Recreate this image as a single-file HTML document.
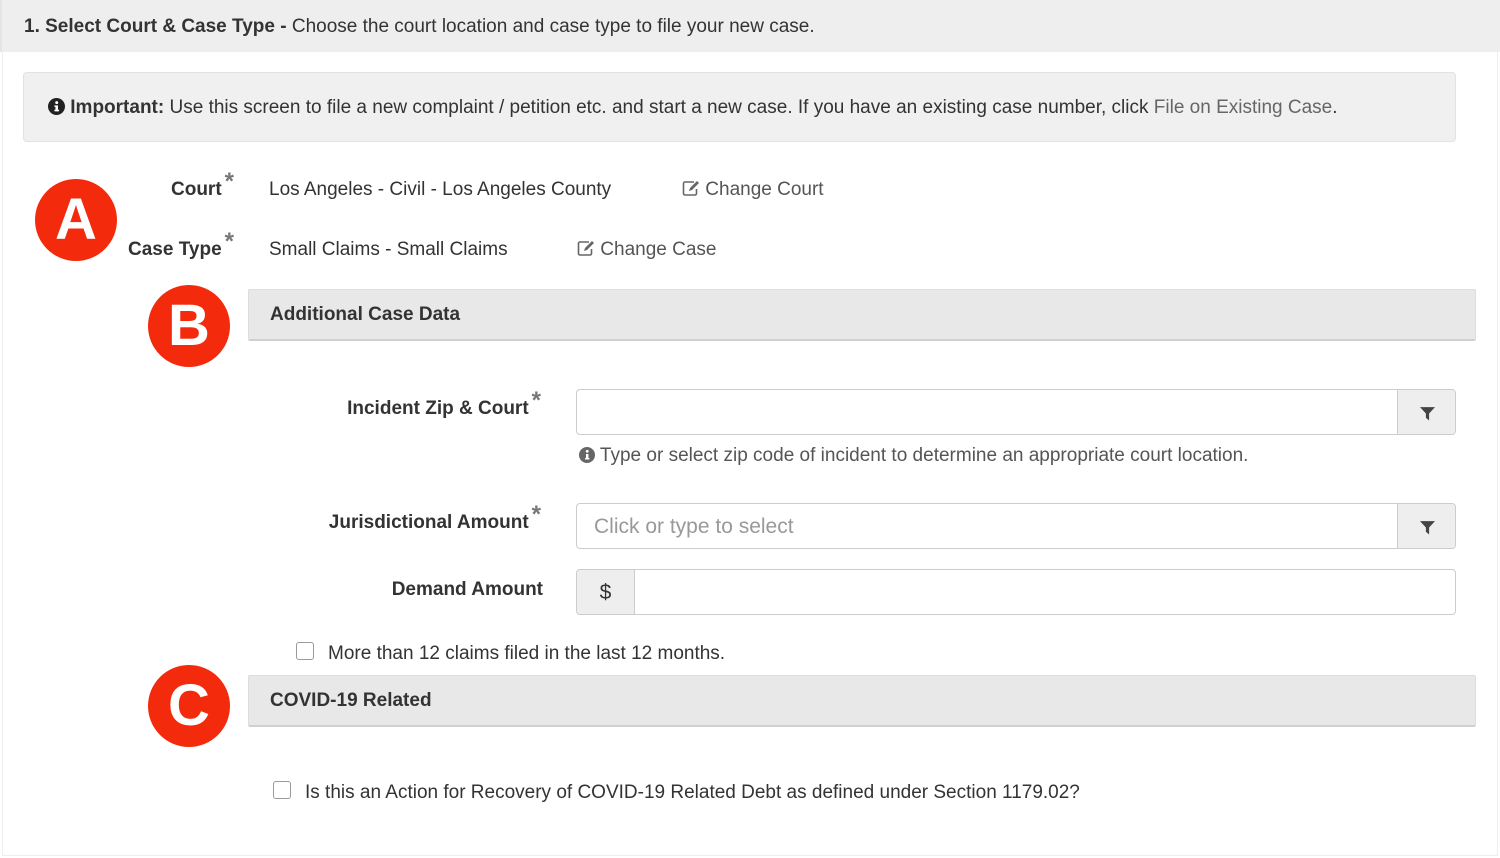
<!DOCTYPE html>
<html><head><meta charset="utf-8"><style>
*{box-sizing:border-box;margin:0;padding:0}
body{width:1500px;height:858px;background:#fff;font-family:"Liberation Sans",Arial,sans-serif;color:#333;position:relative;overflow:hidden;font-size:19px}
.a{position:absolute;white-space:nowrap}
.r{position:absolute;white-space:nowrap;text-align:right}
.hdr{left:0;top:0;width:1500px;height:52px;background:#eeeeee;border-left:2px solid #e4e4e4}
.frame{left:2px;top:52px;width:1496px;height:804px;border:1px solid #eee;border-top:none}
.alert{left:23px;top:72px;width:1433px;height:70px;background:#f0f0f0;border:1px solid #e2e2e2;border-radius:4px}
.lbl{font-weight:bold}
.star{color:#777;font-size:24px;position:relative;top:-6px;margin-left:3px;font-weight:bold;line-height:0}
.circ{width:82px;height:82px;border-radius:50%;background:#f42a0c;color:#fff;font-size:58px;text-align:center;line-height:82px;font-weight:bold}
.bar{left:248px;width:1228px;height:52px;background:#e8e8e8;border:1px solid #ddd;border-bottom:2px solid #d0d0d0;border-radius:2px;font-weight:bold;padding-left:21px;line-height:50px}
.inp{border:1px solid #ccc;border-radius:4px;background:#fff}
.btn{background:#eee;border-left:1px solid #ccc}
.cb{width:18px;height:18px;border:1px solid #999;border-radius:3px;background:#fff}
.gray{color:#555}
</style></head><body>
<div class="a hdr"></div>
<div class="a frame"></div>
<div class="a" style="left:24px;top:16px"><b>1. Select Court &amp; Case Type -</b> Choose the court location and case type to file your new case.</div>
<div class="a alert"></div>
<div class="a" style="left:48px;top:97px"><svg width="17" height="17" viewBox="0 0 16 16" style="vertical-align:-2px"><circle cx="8" cy="8" r="8" fill="#222"/><rect x="7" y="7" width="2.4" height="5.5" fill="#fff"/><rect x="6" y="11" width="4.4" height="1.5" fill="#fff"/><rect x="6" y="7" width="3" height="1.3" fill="#fff"/><circle cx="8.2" cy="4.3" r="1.4" fill="#fff"/></svg> <b>Important:</b> Use this screen to file a new complaint / petition etc. and start a new case. If you have an existing case number, click <span style="color:#666">File on Existing Case</span>.</div>
<div class="a circ" style="left:35px;top:179px">A</div>
<div class="r lbl" style="right:1266px;top:179px">Court<span class="star">*</span></div>
<div class="r lbl" style="right:1266px;top:239px">Case Type<span class="star">*</span></div>
<div class="a" style="left:269px;top:179px">Los Angeles - Civil - Los Angeles County</div>
<div class="a" style="left:269px;top:239px">Small Claims - Small Claims</div>
<div class="a gray" style="left:682px;top:179px"><svg width="18" height="16" viewBox="0 0 18 16" style="vertical-align:-1px"><path d="M12 2H3a1.5 1.5 0 0 0-1.5 1.5v10A1.5 1.5 0 0 0 3 15h10a1.5 1.5 0 0 0 1.5-1.5V9" fill="none" stroke="#666" stroke-width="1.6"/><path d="M7 11l1-3 7-7 2 2-7 7z" fill="#666"/></svg> Change Court</div>
<div class="a gray" style="left:577px;top:239px"><svg width="18" height="16" viewBox="0 0 18 16" style="vertical-align:-1px"><path d="M12 2H3a1.5 1.5 0 0 0-1.5 1.5v10A1.5 1.5 0 0 0 3 15h10a1.5 1.5 0 0 0 1.5-1.5V9" fill="none" stroke="#666" stroke-width="1.6"/><path d="M7 11l1-3 7-7 2 2-7 7z" fill="#666"/></svg> Change Case</div>
<div class="a circ" style="left:148px;top:285px">B</div>
<div class="a bar" style="top:289px">Additional Case Data</div>
<div class="r lbl" style="right:959px;top:398px">Incident Zip &amp; Court<span class="star">*</span></div>
<div class="a inp" style="left:576px;top:389px;width:880px;height:46px;overflow:hidden"><div class="a btn" style="left:820px;top:0;width:60px;height:46px"><svg class="a" style="left:22px;top:16px" width="15" height="15" viewBox="0 0 14 14"><path d="M0 1h14L8.5 7v6.5L5.5 11V7z" fill="#444"/></svg></div></div>
<div class="a gray" style="left:579px;top:445px"><svg width="16" height="16" viewBox="0 0 16 16" style="vertical-align:-2px"><circle cx="8" cy="8" r="8" fill="#666"/><rect x="7" y="7" width="2.4" height="5.5" fill="#fff"/><rect x="6" y="11" width="4.4" height="1.5" fill="#fff"/><circle cx="8.2" cy="4.3" r="1.4" fill="#fff"/></svg> Type or select zip code of incident to determine an appropriate court location.</div>
<div class="r lbl" style="right:959px;top:512px">Jurisdictional Amount<span class="star">*</span></div>
<div class="a inp" style="left:576px;top:503px;width:880px;height:46px;overflow:hidden"><div class="a" style="left:17px;top:11px;color:#999;font-size:21px">Click or type to select</div><div class="a btn" style="left:820px;top:0;width:60px;height:46px"><svg class="a" style="left:22px;top:16px" width="15" height="15" viewBox="0 0 14 14"><path d="M0 1h14L8.5 7v6.5L5.5 11V7z" fill="#444"/></svg></div></div>
<div class="r lbl" style="right:957px;top:579px">Demand Amount</div>
<div class="a inp" style="left:576px;top:569px;width:880px;height:46px;overflow:hidden"><div class="a" style="left:0;top:0;width:58px;height:46px;background:#eee;border-right:1px solid #ccc;text-align:center;line-height:46px;font-size:21px">$</div></div>
<div class="a cb" style="left:296px;top:642px"></div>
<div class="a" style="left:328px;top:643px">More than 12 claims filed in the last 12 months.</div>
<div class="a circ" style="left:148px;top:665px">C</div>
<div class="a bar" style="top:675px">COVID-19 Related</div>
<div class="a cb" style="left:273px;top:781px"></div>
<div class="a" style="left:305px;top:782px">Is this an Action for Recovery of COVID-19 Related Debt as defined under Section 1179.02?</div>
</body></html>
